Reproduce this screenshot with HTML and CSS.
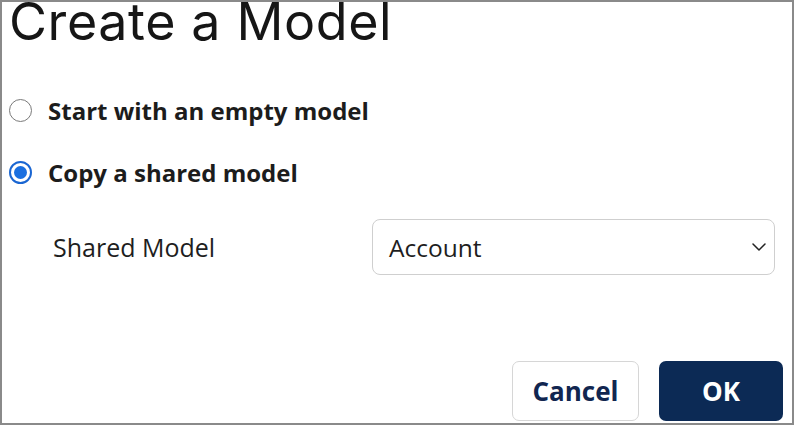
FILE: index.html
```html
<!DOCTYPE html>
<html>
<head>
<meta charset="utf-8">
<link rel="stylesheet" href="styles.css">
</head>
<body>
<div class="dialog">
  <h1 class="title">Create a Model</h1>
  <div class="options">
    <label class="option">
      <span class="radio"></span>
      <span class="option-text">Start with an empty model</span>
    </label>
    <label class="option">
      <span class="radio checked"></span>
      <span class="option-text">Copy a shared model</span>
    </label>
  </div>
  <div class="field">
    <span class="field-label">Shared Model</span>
    <div class="select">
      <span class="select-value">Account</span>
      <svg class="chevron" width="14" height="8" viewBox="0 0 14 8"><path d="M1 1 L7 7 L13 1" fill="none" stroke="#222" stroke-width="1.5" stroke-linecap="round" stroke-linejoin="round"/></svg>
    </div>
  </div>
  <div class="actions">
    <button class="btn btn-secondary">Cancel</button>
    <button class="btn btn-primary">OK</button>
  </div>
</div>
</body>
</html>
```
FILE: styles.css
```css
html, body {
  margin: 0;
  padding: 0;
  background: #fff;
}
.dialog {
  box-sizing: border-box;
  width: 794px;
  height: 425px;
  border: 2px solid #8a8a8a;
  display: flex;
  flex-direction: column;
  font-family: "Open Sans", "Noto Sans", sans-serif;
  color: #1a1a1a;
}
.title {
  margin: 0;
  padding-left: 7px;
  font-family: "Inter", sans-serif;
  font-weight: 400;
  font-size: 52px;
  line-height: 46px;
  letter-spacing: 0.6px;
  color: #161616;
  margin-top: -3px;
}
.options {
  display: flex;
  flex-direction: column;
  gap: 22px;
  margin-top: 45px;
  padding-left: 7px;
}
.option {
  display: flex;
  align-items: center;
  gap: 16px;
  height: 40px;
}
.radio {
  box-sizing: border-box;
  width: 23px;
  height: 23px;
  border-radius: 50%;
  border: 1.5px solid #7a7a7a;
  background: #fff;
  position: relative;
  flex: none;
}
.radio.checked {
  border: 2px solid #1a66d2;
}
.radio.checked::after {
  content: "";
  position: absolute;
  left: 3px;
  top: 3px;
  width: 13px;
  height: 13px;
  border-radius: 50%;
  background: #1a6fe0;
}
.option-text {
  font-size: 24px;
  font-weight: 700;
  color: #1c1c1c;
}
.field {
  display: flex;
  align-items: center;
  margin-top: 27px;
  padding-left: 51px;
}
.field-label {
  width: 319px;
  font-size: 25px;
  color: #1e1e1e;
}
.select {
  box-sizing: border-box;
  width: 403px;
  height: 56px;
  border: 1.5px solid #cfcfcf;
  border-radius: 8px;
  display: flex;
  align-items: center;
  justify-content: space-between;
  padding: 0 8px 0 16px;
}
.select-value {
  font-size: 24.5px;
  color: #1e1e1e;
}
.actions {
  margin-top: auto;
  display: flex;
  justify-content: flex-end;
  gap: 20px;
  padding-right: 9px;
  margin-bottom: 2px;
}
.btn {
  box-sizing: border-box;
  height: 60px;
  border-radius: 7px;
  font-family: "Open Sans", sans-serif;
  font-weight: 700;
  font-size: 26px;
  cursor: pointer;
  padding: 0;
}
.btn-secondary {
  width: 127px;
  background: #fff;
  border: 1.5px solid #d6d6d6;
  color: #112650;
}
.btn-primary {
  width: 124px;
  background: #0c2a55;
  border: none;
  color: #fff;
}
```
